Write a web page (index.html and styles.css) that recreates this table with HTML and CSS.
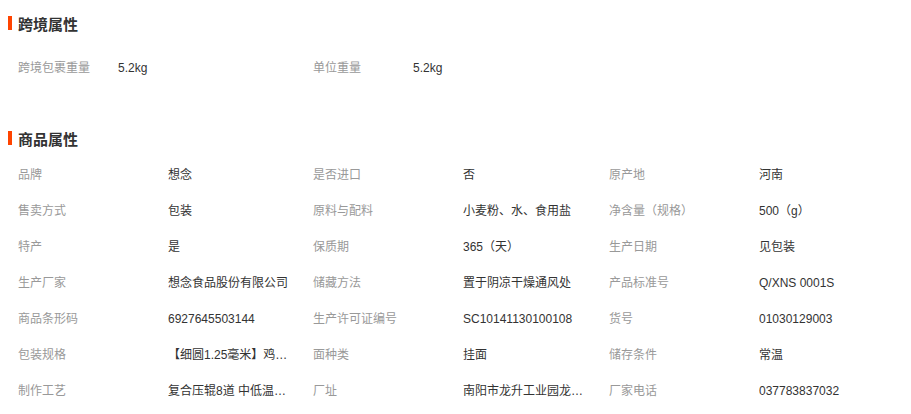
FILE: index.html
```html
<!DOCTYPE html>
<html lang="zh-CN">
  <head>
    <meta charset="UTF-8" />
    <title>商品属性</title>
    <link rel="stylesheet" href="styles.css">
  </head>
  <body>
    <div class="attr-block cross">
      <h3 class="attr-title">跨境属性</h3>
      <ul class="attr-list">
        <li><span class="name">跨境包裹重量</span><span class="value">5.2kg</span></li>
        <li><span class="name">单位重量</span><span class="value">5.2kg</span></li>
      </ul>
    </div>

    <div class="attr-block product">
      <h3 class="attr-title">商品属性</h3>
      <ul class="attr-list">
        <li><span class="name">品牌</span><span class="value">想念</span></li>
        <li><span class="name">是否进口</span><span class="value">否</span></li>
        <li><span class="name">原产地</span><span class="value">河南</span></li>
        <li><span class="name">售卖方式</span><span class="value">包装</span></li>
        <li><span class="name">原料与配料</span><span class="value">小麦粉、水、食用盐</span></li>
        <li><span class="name">净含量（规格）</span><span class="value">500（g）</span></li>
        <li><span class="name">特产</span><span class="value">是</span></li>
        <li><span class="name">保质期</span><span class="value">365（天）</span></li>
        <li><span class="name">生产日期</span><span class="value">见包装</span></li>
        <li><span class="name">生产厂家</span><span class="value">想念食品股份有限公司</span></li>
        <li><span class="name">储藏方法</span><span class="value">置于阴凉干燥通风处</span></li>
        <li><span class="name">产品标准号</span><span class="value">Q/XNS 0001S</span></li>
        <li><span class="name">商品条形码</span><span class="value">6927645503144</span></li>
        <li><span class="name">生产许可证编号</span><span class="value">SC10141130100108</span></li>
        <li><span class="name">货号</span><span class="value">01030129003</span></li>
        <li><span class="name">包装规格</span><span class="value">【细圆1.25毫米】鸡蛋挂面</span></li>
        <li><span class="name">面种类</span><span class="value">挂面</span></li>
        <li><span class="name">储存条件</span><span class="value">常温</span></li>
        <li><span class="name">制作工艺</span><span class="value">复合压辊8道 中低温烘干</span></li>
        <li><span class="name">厂址</span><span class="value">南阳市龙升工业园龙升大道</span></li>
        <li><span class="name">厂家电话</span><span class="value">037783837032</span></li>
      </ul>
    </div>
  </body>
</html>
```

FILE: styles.css
```css
body {
  margin: 0;
  background-color: #fff;
  font-family: "Liberation Sans", "Noto Sans CJK SC", sans-serif;
  font-size: 12px;
  color: #333;
}
.attr-title {
  display: flex;
  align-items: center;
  margin: 0;
  padding-left: 8px;
  height: 20px;
  font-size: 15px;
  font-weight: bold;
  color: #333;
}
.attr-title::before {
  content: "";
  width: 4px;
  height: 14px;
  margin-right: 6px;
  background-color: #ff4400;
}
.cross {
  padding-top: 13px;
}
.product {
  margin-top: 42px;
}
.attr-list {
  display: grid;
  grid-template-columns: 295px 296px 296px;
  margin: 0;
  padding: 0 0 0 18px;
  list-style: none;
}
.cross .attr-list {
  margin-top: 17px;
}
.product .attr-list {
  margin-top: 9px;
}
.attr-list li {
  display: flex;
  height: 36px;
  line-height: 36px;
}
.attr-list .name {
  width: 150px;
  flex-shrink: 0;
  color: #999;
}
.cross .attr-list .name {
  width: 100px;
}
.attr-list .value {
  width: 125px;
  overflow: hidden;
  white-space: nowrap;
  text-overflow: ellipsis;
  color: #333;
}
```
